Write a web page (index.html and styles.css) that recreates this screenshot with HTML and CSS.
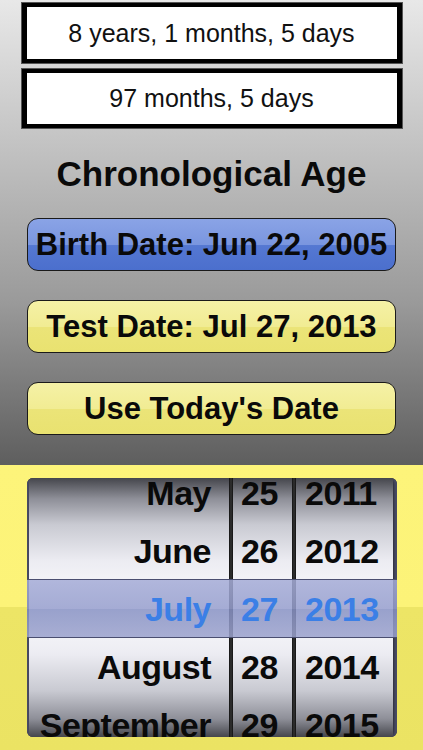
FILE: index.html
```html
<!DOCTYPE html>
<html>
<head>
<meta charset="utf-8">
<link rel="stylesheet" href="styles.css">
</head>
<body>
<div class="top">
  <div class="result">8 years, 1 months, 5 days</div>
  <div class="result second">97 months, 5 days</div>
  <h1 class="title">Chronological Age</h1>
  <div class="btn blue">Birth Date: Jun 22, 2005</div>
  <div class="btn yellow">Test Date: Jul 27, 2013</div>
  <div class="btn yellow">Use Today's Date</div>
</div>
<div class="bottom">
  <div class="picker">
    <div class="col month">
      <div class="rows">
        <div class="row">May</div>
        <div class="row">June</div>
        <div class="row sel">July</div>
        <div class="row">August</div>
        <div class="row">September</div>
      </div>
    </div>
    <div class="sep"></div>
    <div class="col day">
      <div class="rows">
        <div class="row">25</div>
        <div class="row">26</div>
        <div class="row sel">27</div>
        <div class="row">28</div>
        <div class="row">29</div>
      </div>
    </div>
    <div class="sep"></div>
    <div class="col year">
      <div class="rows">
        <div class="row">2011</div>
        <div class="row">2012</div>
        <div class="row sel">2013</div>
        <div class="row">2014</div>
        <div class="row">2015</div>
      </div>
    </div>
    <div class="bar"></div>
  </div>
</div>
</body>
</html>
```
FILE: styles.css
```css
html, body {
  margin: 0;
  padding: 0;
}
body {
  width: 423px;
  height: 750px;
  overflow: hidden;
  font-family: "Liberation Sans", Arial, sans-serif;
}
.top {
  height: 465px;
  box-sizing: border-box;
  background: linear-gradient(to bottom, #e8e8e8 0%, #c4c4c4 30%, #9a9a9a 65%, #5e5e5e 100%);
  display: flex;
  flex-direction: column;
  align-items: center;
  padding-top: 3px;
}
.result {
  width: 380px;
  height: 60px;
  box-sizing: border-box;
  background: #fff;
  border: 5px solid #000;
  border-top-width: 4px;
  border-bottom-width: 4px;
  box-shadow: 0 0 0 1px #555;
  display: flex;
  align-items: center;
  justify-content: center;
  font-size: 25px;
  color: #111;
}
.result.second {
  margin-top: 6px;
  height: 59px;
}
.title {
  margin: 25px 0 0;
  height: 42px;
  font-size: 35px;
  font-weight: bold;
  line-height: 42px;
  color: #0a0a0a;
}
.btn {
  width: 369px;
  height: 53px;
  box-sizing: border-box;
  border: 1.5px solid #1a1a1a;
  border-radius: 11px;
  display: flex;
  align-items: center;
  justify-content: center;
  font-weight: bold;
  font-size: 31px;
  color: #0a0a0a;
}
.btn.blue {
  margin-top: 23px;
  background: linear-gradient(to bottom, #8aa3e6 0%, #7a96df 50%, #5578d2 52%, #4b6fcd 100%);
}
.btn.yellow {
  margin-top: 29px;
  background: linear-gradient(to bottom, #f5f1a6 0%, #f1ec93 50%, #ebe478 52%, #e9e270 100%);
}
.bottom {
  height: 285px;
  background: linear-gradient(to bottom, #fdf47a 0%, #fcf378 50%, #ede566 50%, #ebe363 100%);
  padding-top: 13px;
  box-sizing: border-box;
}
.picker {
  position: relative;
  margin-left: 27px;
  width: 370px;
  height: 259px;
  display: flex;
  border-radius: 6px;
  overflow: hidden;
  background: #2b2b33;
  box-shadow: inset 4px 0 3px -1px #4a4c66, inset -4px 0 3px -1px #4a4c66;
}
.col {
  overflow: hidden;
  background: linear-gradient(to bottom, #45464c 0%, #8e8f98 8%, #c9cad2 18%, #ececf2 32%, #fbfbfe 50%, #ececf2 68%, #c9cad2 82%, #8e8f98 93%, #45464c 100%);
}
.month { width: 200px; margin-left: 2px; }
.day { width: 59px; }
.year { width: 97px; margin-right: 4px; }
.sep {
  width: 4px;
  background: linear-gradient(to right, #111 0%, #333 50%, #111 100%);
}
.rows {
  margin-top: -14px;
}
.row {
  height: 58px;
  line-height: 58px;
  font-weight: bold;
  font-size: 34px;
  color: #0a0a0a;
  white-space: nowrap;
  letter-spacing: -0.5px;
}
.month .row { text-align: right; padding-right: 18px; }
.day .row { text-align: center; padding-right: 6px; }
.year .row { padding-left: 9px; }
.row.sel {
  position: relative;
  z-index: 1;
  color: #3b7fe6;
}
.bar {
  position: absolute;
  left: 0;
  right: 0;
  top: 101px;
  height: 57px;
  border-top: 1px solid #4a4e70;
  border-bottom: 1px solid #4a4e70;
  background: linear-gradient(to bottom, rgba(165,172,215,0.85) 0%, rgba(150,158,205,0.85) 50%, rgba(135,145,195,0.85) 51%, rgba(155,162,205,0.85) 100%);
}
```
